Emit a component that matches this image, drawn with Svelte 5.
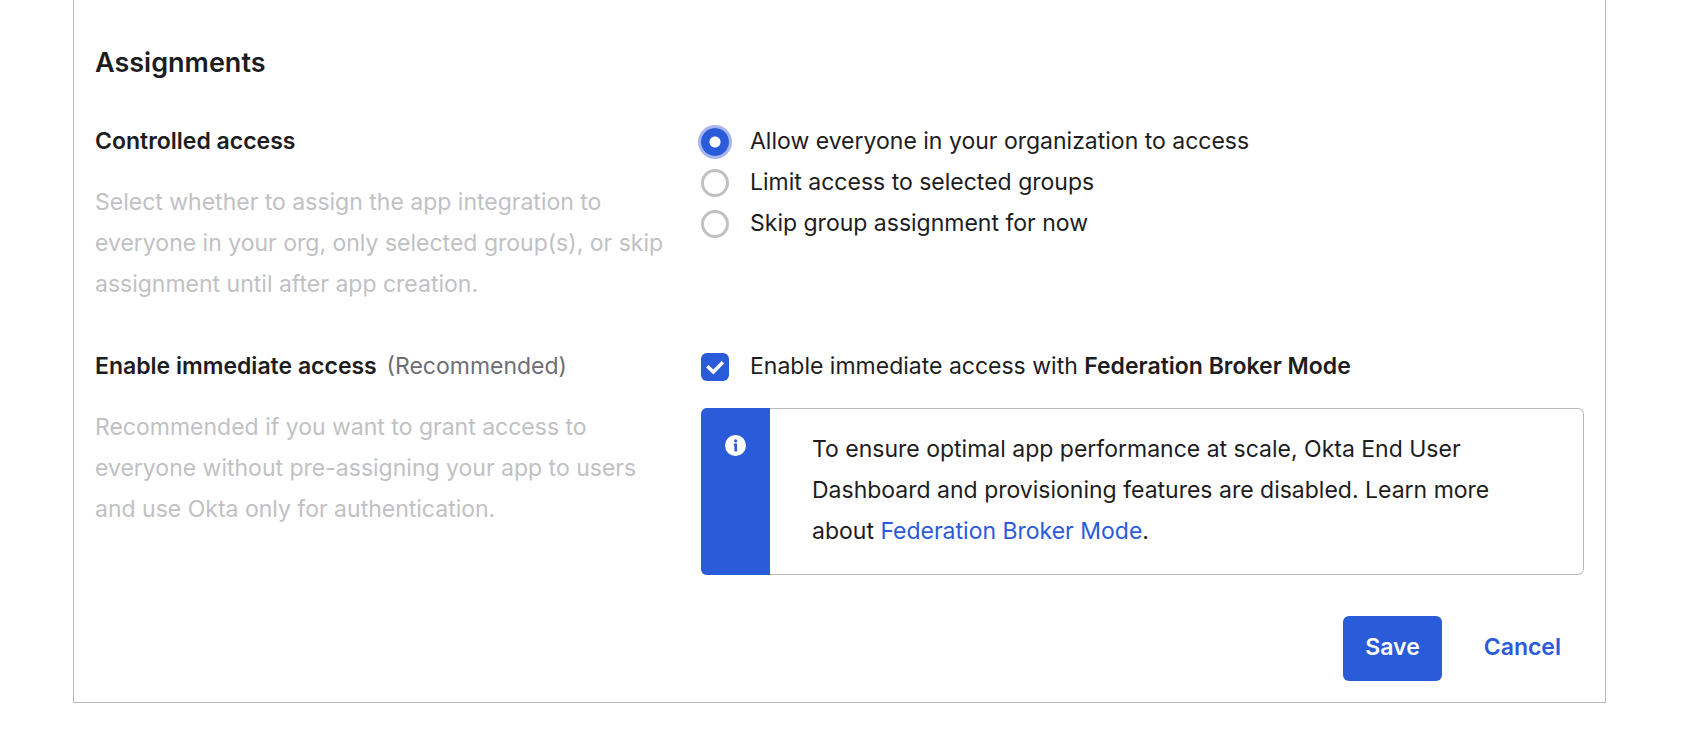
<script>
  const accessOptions = [
    { value: 'everyone', label: 'Allow everyone in your organization to access' },
    { value: 'groups', label: 'Limit access to selected groups' },
    { value: 'skip', label: 'Skip group assignment for now' }
  ];

  let access = $state('everyone');
  let immediate = $state(true);
</script>

<main class="page">
  <form class="panel" onsubmit={(event) => event.preventDefault()}>
    <h1>Assignments</h1>

    <section class="row">
      <div class="about">
        <h2 id="controlled">Controlled access</h2>
        <p class="hint">
          Select whether to assign the app integration to everyone in your org, only selected
          group(s), or skip assignment until after app creation.
        </p>
      </div>
      <div class="fields" role="radiogroup" aria-labelledby="controlled">
        {#each accessOptions as option}
          <label class="choice">
            <input type="radio" name="access" value={option.value} bind:group={access} />
            <span>{option.label}</span>
          </label>
        {/each}
      </div>
    </section>

    <section class="row">
      <div class="about">
        <h2>Enable immediate access <span class="note">(Recommended)</span></h2>
        <p class="hint">
          Recommended if you want to grant access to everyone without pre-assigning your app to
          users and use Okta only for authentication.
        </p>
      </div>
      <div class="fields">
        <label class="choice">
          <input type="checkbox" bind:checked={immediate} />
          <span>Enable immediate access with <strong>Federation Broker Mode</strong></span>
        </label>
        <div class="infobox">
          <div class="strip">
            <svg viewBox="0 0 21 21" aria-hidden="true">
              <circle cx="10.5" cy="10.5" r="10.5" fill="#fff" />
              <circle cx="10.6" cy="5.8" r="1.6" fill="#2a5bd9" />
              <path d="M8.8 8.6H12v8H9.4v-6h-.6z" fill="#2a5bd9" />
            </svg>
          </div>
          <p>
            To ensure optimal app performance at scale, Okta End User Dashboard and provisioning
            features are disabled. Learn more about <a href="#broker">Federation Broker Mode</a>.
          </p>
        </div>
      </div>
    </section>

    <div class="actions">
      <button class="save" type="submit">Save</button>
      <button class="cancel" type="button">Cancel</button>
    </div>
  </form>
</main>

<style>
  :global(body) {
    margin: 0;
    background: #fff;
  }

  .page {
    padding: 0 80px 28px 73px;
    font-family: Inter, 'Open Sans', sans-serif;
    font-size: 23px;
    line-height: 41px;
    color: #1d1d21;
  }

  .panel {
    padding: 42px 21px 21px;
    border: 1px solid #bababc;
    border-top: 0;
  }

  h1,
  h2,
  p {
    margin: 0;
  }

  h1 {
    margin-bottom: 38px;
    font-size: 27px;
    font-weight: 600;
    line-height: 41px;
  }

  h2 {
    font-size: inherit;
    font-weight: 600;
  }

  .row {
    display: grid;
    grid-template-columns: 606fr 883fr;
    margin-bottom: 41px;
  }

  .about {
    padding-right: 28px;
  }

  .note {
    margin-left: 4px;
    font-weight: 400;
    color: #6e6e72;
  }

  .hint {
    margin-top: 20px;
    color: #c1c1c4;
  }

  .choice {
    display: flex;
    align-items: center;
    gap: 21px;
  }

  input {
    flex: none;
    box-sizing: border-box;
    width: 28px;
    height: 28px;
    margin: 1px 0 0;
    appearance: none;
    border: 3px solid #c1c1c1;
    background: #fff;
  }

  input[type='radio'] {
    border-radius: 50%;
  }

  input[type='radio']:checked {
    border: 0;
    background: radial-gradient(circle, #fff 5px, #2a5bd9 6px);
    box-shadow: 0 0 0 3px #a9b5ee;
  }

  input[type='checkbox'] {
    border-radius: 6px;
  }

  input[type='checkbox']:checked {
    border: 0;
    background: #2a5bd9
      url("data:image/svg+xml,%3Csvg xmlns='http://www.w3.org/2000/svg' viewBox='0 0 28 28'%3E%3Cpath d='M6.4 13.2l5.9 5.8 9.6-9.8' fill='none' stroke='%23fff' stroke-width='3.5'/%3E%3C/svg%3E");
  }

  strong {
    font-weight: 600;
  }

  .infobox {
    display: flex;
    margin-top: 21px;
    border: 1px solid #bababc;
    border-left: 0;
    border-radius: 6px;
  }

  .strip {
    flex: none;
    display: flex;
    justify-content: center;
    width: 69px;
    margin: -1px 0;
    padding-top: 27px;
    box-sizing: border-box;
    border-radius: 6px 0 0 6px;
    background: #2a5bd9;
  }

  .strip svg {
    width: 21px;
    height: 21px;
  }

  .infobox p {
    padding: 20px 42px 22px;
  }

  a {
    color: #2a5bd9;
    text-decoration: none;
  }

  .actions {
    display: flex;
    justify-content: flex-end;
    gap: 20px;
    padding-right: 1px;
  }

  button {
    padding: 11px 22px 13px;
    border: 0;
    border-radius: 6px;
    font: inherit;
    font-weight: 600;
    cursor: pointer;
  }

  .save {
    background: #2a5bd9;
    color: #fff;
  }

  .cancel {
    background: none;
    color: #2a5bd9;
  }
</style>
